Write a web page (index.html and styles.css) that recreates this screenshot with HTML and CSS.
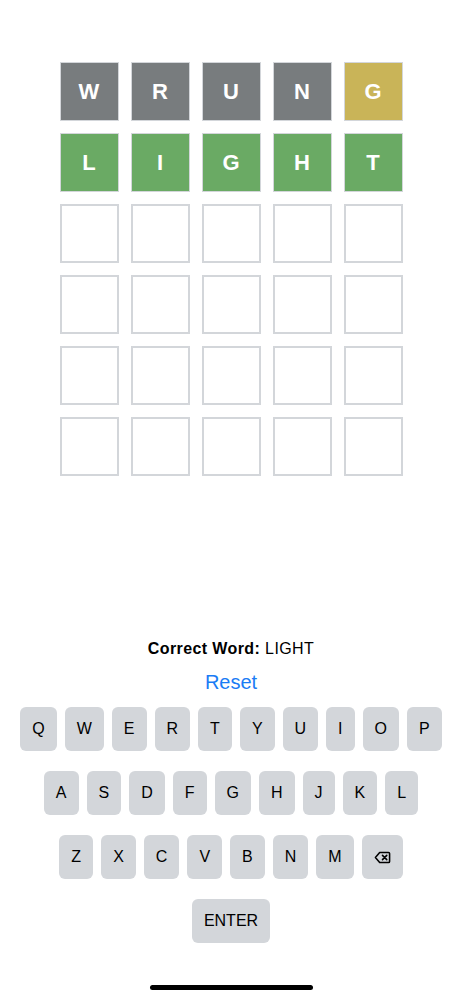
FILE: index.html
```html
<!DOCTYPE html>
<html lang="en">
<head>
    <meta charset="UTF-8">
    <meta name="viewport" content="width=device-width, initial-scale=1.0">
    <title>wordle</title>
    <link rel="stylesheet" href="styles.css">
</head>
<body>
    <div id="app">
        <div id="board">
            <div class="tile absent">W</div>
            <div class="tile absent">R</div>
            <div class="tile absent">U</div>
            <div class="tile absent">N</div>
            <div class="tile present">G</div>

            <div class="tile correct">L</div>
            <div class="tile correct">I</div>
            <div class="tile correct">G</div>
            <div class="tile correct">H</div>
            <div class="tile correct">T</div>

            <div class="tile"></div><div class="tile"></div><div class="tile"></div><div class="tile"></div><div class="tile"></div>
            <div class="tile"></div><div class="tile"></div><div class="tile"></div><div class="tile"></div><div class="tile"></div>
            <div class="tile"></div><div class="tile"></div><div class="tile"></div><div class="tile"></div><div class="tile"></div>
            <div class="tile"></div><div class="tile"></div><div class="tile"></div><div class="tile"></div><div class="tile"></div>
        </div>

        <p id="message"><strong>Correct Word:</strong> LIGHT</p>
        <a href="#" id="reset">Reset</a>

        <div id="keyboard">
            <div class="key-row">
                <button class="key">Q</button>
                <button class="key">W</button>
                <button class="key">E</button>
                <button class="key">R</button>
                <button class="key">T</button>
                <button class="key">Y</button>
                <button class="key">U</button>
                <button class="key">I</button>
                <button class="key">O</button>
                <button class="key">P</button>
            </div>
            <div class="key-row">
                <button class="key">A</button>
                <button class="key">S</button>
                <button class="key">D</button>
                <button class="key">F</button>
                <button class="key">G</button>
                <button class="key">H</button>
                <button class="key">J</button>
                <button class="key">K</button>
                <button class="key">L</button>
            </div>
            <div class="key-row">
                <button class="key">Z</button>
                <button class="key">X</button>
                <button class="key">C</button>
                <button class="key">V</button>
                <button class="key">B</button>
                <button class="key">N</button>
                <button class="key">M</button>
                <button class="key" title="backspace">
                    <svg width="17" height="13" viewBox="0 0 24 18" fill="none" stroke="#000" stroke-width="2.2" stroke-linejoin="round" stroke-linecap="round">
                        <path d="M8 2h12.5a1.5 1.5 0 0 1 1.5 1.5v11a1.5 1.5 0 0 1-1.5 1.5H8L2 9z"/>
                        <path d="M12 6l6 6M18 6l-6 6"/>
                    </svg>
                </button>
            </div>
            <div class="key-row">
                <button class="key">ENTER</button>
            </div>
        </div>

        <div id="home-bar"></div>
    </div>
</body>
</html>
```

FILE: styles.css
```css
body {
    margin: 0;
    background: #fff;
    font-family: "Liberation Sans", Arial, sans-serif;
    color: #000;
}

#app {
    width: 462px;
    height: 1000px;
    display: flex;
    flex-direction: column;
    align-items: center;
}

#board {
    display: grid;
    grid-template-columns: repeat(5, 59px);
    grid-auto-rows: 59px;
    gap: 12px;
    margin-top: 62px;
}

.tile {
    box-sizing: border-box;
    border: 2px solid #d3d6da;
    display: flex;
    align-items: center;
    justify-content: center;
    font-size: 22px;
    font-weight: bold;
    color: #fff;
}

.absent {
    background-color: #787c7e;
    border: 1px solid #d3d6da;
}

.present {
    background-color: #c9b458;
    border: 1px solid #d3d6da;
}

.correct {
    background-color: #6aaa64;
    border: 1px solid #d3d6da;
}

#message {
    margin: 163px 0 0;
    font-size: 16px;
    line-height: 19px;
    letter-spacing: 0.4px;
}

#message strong {
    font-weight: bold;
}

#reset {
    margin-top: 12px;
    font-size: 20px;
    line-height: 24px;
    color: #1a7cf5;
    text-decoration: none;
}

#keyboard {
    margin-top: 13px;
    display: flex;
    flex-direction: column;
    gap: 20px;
}

.key-row {
    display: flex;
    justify-content: center;
    gap: 8px;
}

.key {
    height: 44px;
    padding: 0 12px;
    border: none;
    border-radius: 6px;
    background-color: #d3d6da;
    font-family: "Liberation Sans", Arial, sans-serif;
    font-size: 16px;
    color: #000;
    display: flex;
    align-items: center;
    justify-content: center;
}

#home-bar {
    margin-top: 42px;
    width: 163px;
    height: 5px;
    border-radius: 3px;
    background-color: #000;
}
```
